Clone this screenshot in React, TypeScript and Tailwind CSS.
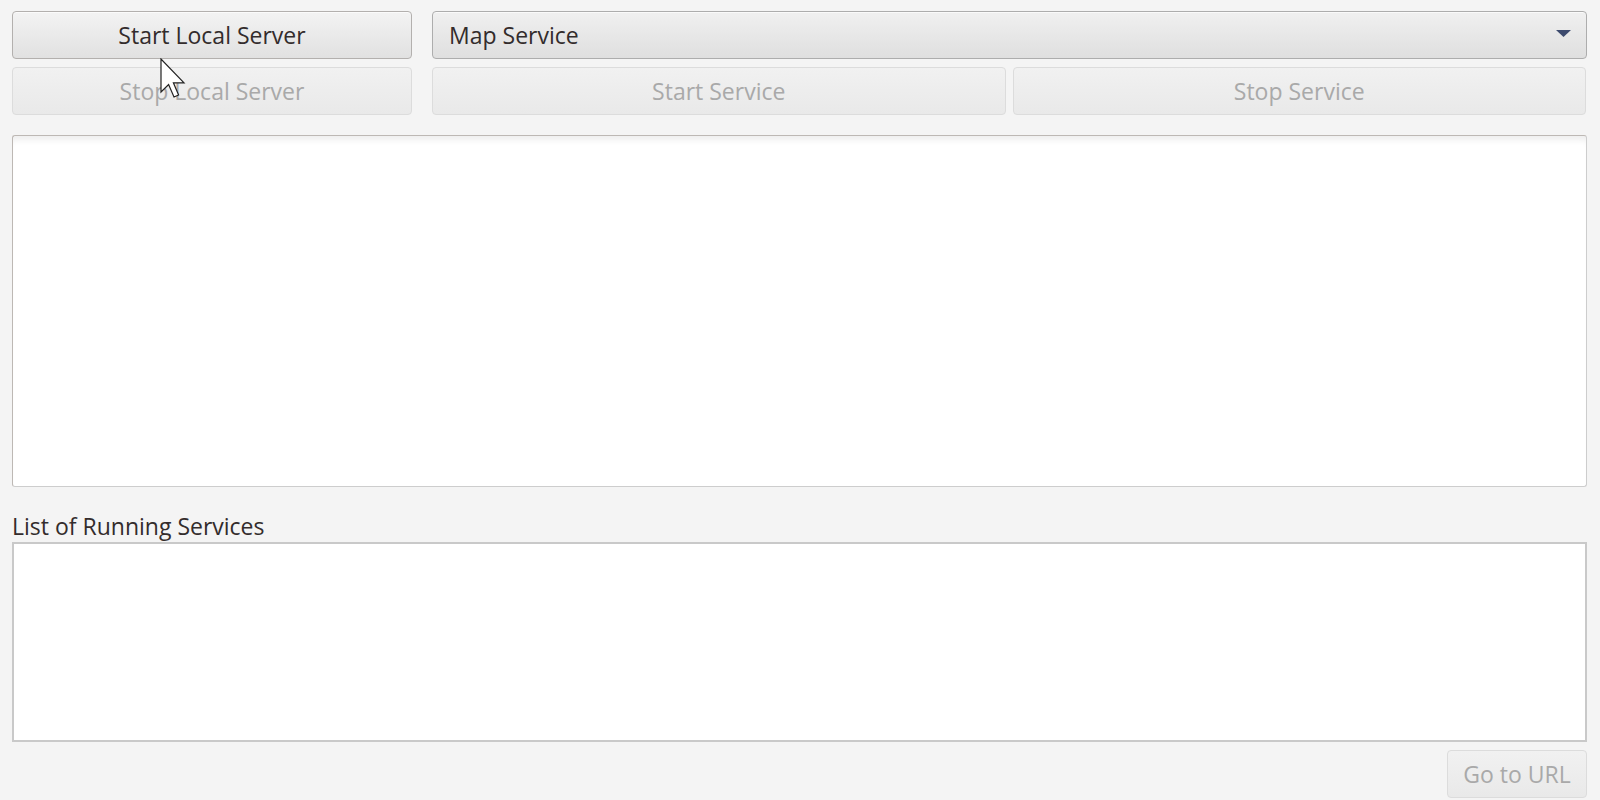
import React from "react";

const font = { fontFamily: '"Open Sans", "Noto Sans", sans-serif' };

function Btn({ children, disabled, className = "" }: { children: React.ReactNode; disabled?: boolean; className?: string }) {
  return (
    <div
      className={
        "flex h-[48px] items-center justify-center rounded-[4px] border text-[23px] " +
        (disabled
          ? "border-[#dcdcdc] bg-gradient-to-b from-[#f1f1f1] to-[#e9e9e9] text-[#a9a9a9] "
          : "border-[#b3b0ae] bg-gradient-to-b from-[#f3f3f3] to-[#e1e1e1] text-[#332c2c] shadow-[inset_0_1px_0_#fbfbfb] ") +
        className
      }
    >
      {children}
    </div>
  );
}

export default function App() {
  return (
    <div className="relative flex h-[800px] w-[1600px] flex-col bg-[#f4f4f4] px-[12px] pt-[11px]" style={font}>
      <div className="grid grid-cols-[400px_1fr] gap-x-[20px] gap-y-[8px] pr-[1px]">
        <Btn>Start Local Server</Btn>
        <div className="flex h-[48px] items-center justify-between rounded-[4px] border-[1.5px] border-[#adadad] bg-gradient-to-b from-[#f0f0f0] to-[#dfdfdf] pl-[16px] pr-[14px] text-[23px] text-[#332c2c] shadow-[inset_0_1px_0_#fafafa]">
          <span>Map Service</span>
          <svg width="16" height="8" viewBox="0 0 16 8" className="mt-[-2px]">
            <polygon points="0,0 15,0 7.5,7" fill="#3d4b6e" />
          </svg>
        </div>
        <Btn disabled>Stop Local Server</Btn>
        <div className="grid grid-cols-2 gap-[7px] pr-[1px]">
          <Btn disabled>Start Service</Btn>
          <Btn disabled>Stop Service</Btn>
        </div>
      </div>

      <div className="mt-[20px] h-[352px] rounded-[3px] border-[1.5px] border-[#bdb8b4] border-b-[#cdcdcd] border-r-[#cdcdcd] bg-white shadow-[inset_0_8px_6px_-4px_rgba(0,0,0,0.07)] mr-[1px]" />

      <div className="mt-[24px] text-[23px] leading-[30px] text-[#332c2c]">List of Running Services</div>

      <div className="mt-[1px] h-[200px] border-2 border-[#c9c9c9] bg-white mr-[1px]" />

      <div className="mt-[8px] flex justify-end pr-[1px]">
        <Btn disabled className="w-[140px]">Go to URL</Btn>
      </div>

      <svg className="absolute left-[160px] top-[58px]" width="28" height="42" viewBox="0 0 14 21">
        <path d="M0.5,0.5 L0.5,17 L4.3,13.3 L7,19.5 L9.3,18.5 L6.7,12.4 L12,12.4 Z" fill="#ffffff" stroke="#222" strokeWidth="0.6" strokeLinejoin="miter" />
      </svg>
    </div>
  );
}
